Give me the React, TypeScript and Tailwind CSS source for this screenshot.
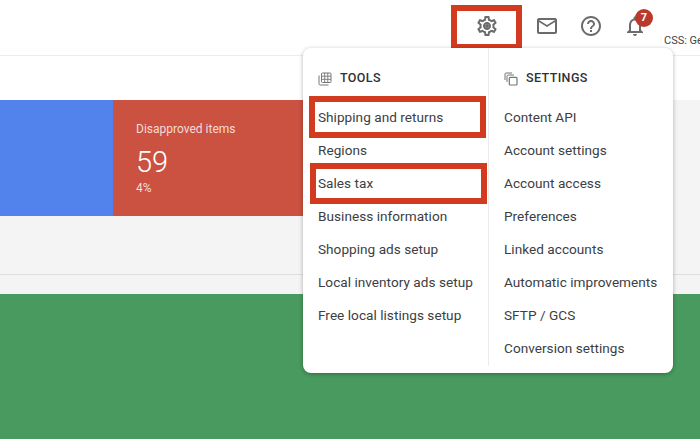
import { MdHelpOutline, MdOutlineEmail, MdOutlineNotifications, MdOutlineSettings } from 'react-icons/md';

const tools = [
  'Shipping and returns',
  'Regions',
  'Sales tax',
  'Business information',
  'Shopping ads setup',
  'Local inventory ads setup',
  'Free local listings setup',
];

const settings = [
  'Content API',
  'Account settings',
  'Account access',
  'Preferences',
  'Linked accounts',
  'Automatic improvements',
  'SFTP / GCS',
  'Conversion settings',
];

const ToolsIcon = () => (
  <svg viewBox="0 0 14 14" className="h-[14px] w-[14px] text-[#757575]" fill="none" stroke="currentColor" strokeWidth="1">
    <path d="M1 3.5v8.2c0 .7.6 1.3 1.3 1.3h8.2" />
    <rect x="3.5" y="1" width="9.5" height="9.5" rx="1" />
    <path d="M3.5 4.2h9.5M3.5 7.3h9.5M6.7 1v9.5M9.8 1v9.5" strokeWidth="0.9" />
  </svg>
);

const SettingsIcon = () => (
  <svg viewBox="0 0 14 14" className="h-[14px] w-[14px] text-[#757575]" fill="none" stroke="currentColor" strokeWidth="1">
    <path d="M1 8V2c0-.6.4-1 1-1h6" />
    <path d="M3 10V4.2c0-.7.5-1.2 1.2-1.2H10" />
    <rect x="5.3" y="5.3" width="7.7" height="7.7" rx="1" strokeWidth="1.2" />
  </svg>
);

const MenuColumn = ({ title, icon, items, className }: { title: string; icon: React.ReactNode; items: string[]; className: string }) => (
  <div className={className}>
    <div className="flex h-[33px] items-center gap-2 text-[12.5px] font-medium tracking-[0.4px] text-[#303134]">
      {icon}
      <span>{title}</span>
    </div>
    <ul className="mt-[6px]">
      {items.map((item) => (
        <li key={item} className="relative flex h-[33px] items-center whitespace-nowrap text-[13.6px] tracking-[0.03px] text-[#3c4043]">
          {item}
          {item === 'Shipping and returns' && (
            <span className="absolute left-[-9px] top-[-5px] h-[42px] w-[177px] border-[6px] border-[#d33b20]" />
          )}
          {item === 'Sales tax' && (
            <span className="absolute left-[-8px] top-[-4px] h-[41px] w-[177px] border-[6px] border-[#d33b20]" />
          )}
        </li>
      ))}
    </ul>
  </div>
);

export default function App() {
  return (
    <div className="relative flex h-[439px] w-[700px] flex-col overflow-hidden bg-white font-['Roboto',sans-serif]">
      <header className="relative flex h-[56px] items-start justify-end border-b border-[#ececec] bg-white pr-[53px] pt-[14px] text-[#6b6b6b]">
        <div className="flex items-center gap-[20px]">
          <span className="relative mr-[16px]">
            <MdOutlineSettings className="h-[24px] w-[24px]" />
            <span className="absolute left-[10px] top-[10px] h-[4px] w-[4px] rounded-full bg-[#6b6b6b]" />
            <span className="absolute left-[-24px] top-[-9px] h-[45px] w-[71px] border-[6px] border-[#d33b20]" />
          </span>
          <MdOutlineEmail className="h-[24px] w-[24px]" />
          <MdHelpOutline className="h-[24px] w-[24px]" />
          <span className="relative">
            <MdOutlineNotifications className="h-[24px] w-[24px]" />
            <span className="absolute left-[12px] top-[-5px] flex h-[18px] w-[18px] items-center justify-center rounded-full bg-[#b93a2b] text-[11px] font-bold text-white">
              7
            </span>
          </span>
        </div>
        <span className="absolute left-[664px] top-[33px] whitespace-nowrap text-[11px] text-[#444]">CSS: Ge</span>
      </header>

      <div className="h-[44px] bg-white" />

      <div className="flex h-[116px] bg-[#f4f4f4]">
        <div className="w-[113px] bg-[#5283ec]" />
        <div className="w-[200px] bg-[#cb5140] pl-[23px] pt-[22px] text-white">
          <p className="text-[12px] leading-[14px] text-[#f6dcd8]">Disapproved items</p>
          <p className="mt-[8px] text-[29px] font-light leading-[36px]">59</p>
          <p className="mt-[1px] text-[12px] leading-[14px] text-[#f6dcd8]">4%</p>
        </div>
      </div>

      <div className="h-[59px] border-b border-[#dedede] bg-[#f4f4f4]" />
      <div className="h-[19px] bg-[#f4f4f4]" />
      <div className="flex-1 bg-[#489a5e]" />

      <div className="absolute left-[303px] top-[48px] flex h-[325px] w-[370px] rounded-[8px] bg-white shadow-[0_1px_4px_rgba(0,0,0,0.3)]">
        <MenuColumn title="TOOLS" icon={<ToolsIcon />} items={tools} className="w-[185px] pl-[15px] pt-[14px]" />
        <div className="mb-[7px] w-px bg-[#ececec]" />
        <MenuColumn title="SETTINGS" icon={<SettingsIcon />} items={settings} className="flex-1 pl-[15px] pt-[14px]" />
      </div>
    </div>
  );
}
